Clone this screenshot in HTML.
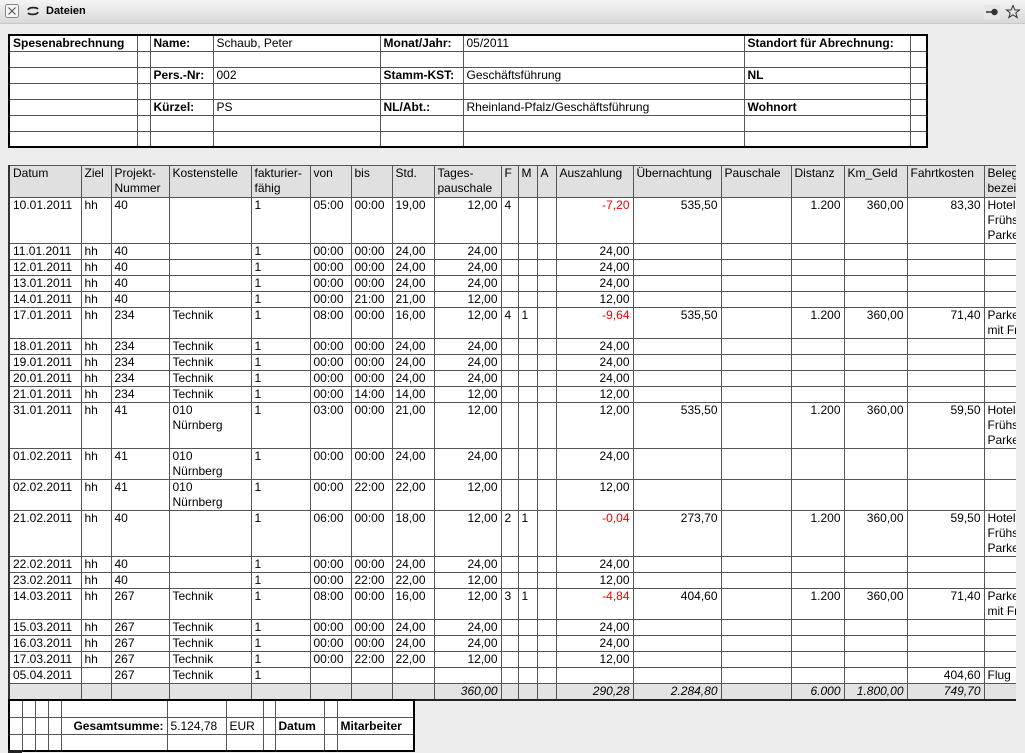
<!DOCTYPE html>
<html><head><meta charset="utf-8"><style>
*{box-sizing:border-box}
body{margin:0;width:1025px;height:753px;overflow:hidden;background:#ededed;font-family:"Liberation Sans",Arial,sans-serif;font-size:12px;color:#000;position:relative}
#bar{position:absolute;left:0;top:0;width:1025px;height:24px;background:linear-gradient(#f4f4f4,#d9d9d9);border-bottom:1px solid #c8c8c8}
#bar .t{position:absolute;left:46px;top:5px;font-weight:bold;font-size:11px}
table{border-collapse:collapse;table-layout:fixed;position:absolute;background:#fff}
td{border:1px solid #555;padding:0 3px;vertical-align:top;line-height:15px;white-space:nowrap;overflow:hidden}
#top{left:8px;top:34px;width:918px;border:2px solid #000}
#top tr{height:16px}
#top td{line-height:14px}
b{font-weight:bold}
#wrap{position:absolute;left:8px;top:165px;width:1008px;height:536px;overflow:hidden}
#main{left:0;top:0;width:1064px;border-left:2px solid #333;border-top:1px solid #555;border-bottom:2px solid #222}
#main tr{height:16px}
#main tr.h{height:32px;background:#e0e0e0}
#main tr.r2{height:31px}
#main tr.r3{height:46px}
#main tr.tot{background:#e3e3e3;font-style:italic}
.r{text-align:right}
.red{color:#e00}
#foot{left:8px;top:699px;width:405px;border:2px solid #000}
#foot tr{height:17px}
#foot td{line-height:16px}
</style></head><body>
<div id="bar">
<svg style="position:absolute;left:5px;top:4px" width="14" height="14"><rect x="0.5" y="0.5" width="13" height="13" rx="2" fill="#f6f6f6" stroke="#888"/><path d="M3.5 3.5L10.5 10.5M10.5 3.5L3.5 10.5" stroke="#555" stroke-width="1.2"/></svg>
<svg style="position:absolute;left:26px;top:6px" width="14" height="10"><path d="M2 4C3 1 10 1 12 3M12 6C11 9 4 9 2 7" stroke="#222" stroke-width="1.8" fill="none"/></svg>
<span class="t">Dateien</span>
<svg style="position:absolute;left:984px;top:5px" width="16" height="14"><rect x="0" y="0" width="16" height="14" fill="#e6e6e6"/><path d="M2 7H8" stroke="#333" stroke-width="1.5"/><circle cx="10.5" cy="7" r="3.2" fill="#333"/></svg>
<svg style="position:absolute;left:1005px;top:4px" width="16" height="16"><path d="M8 1.5L9.9 6H14.5L10.8 8.9L12.2 13.6L8 10.8L3.8 13.6L5.2 8.9L1.5 6H6.1Z" fill="none" stroke="#333" stroke-width="1"/></svg>
</div>

<table id="top">
<colgroup><col style="width:128px"><col style="width:13px"><col style="width:63px"><col style="width:167px"><col style="width:83px"><col style="width:281px"><col style="width:166px"><col style="width:17px"></colgroup>
<tr><td><b>Spesenabrechnung</b></td><td></td><td><b>Name:</b></td><td>Schaub, Peter</td><td><b>Monat/Jahr:</b></td><td>05/2011</td><td><b>Standort für Abrechnung:</b></td><td></td></tr>
<tr><td></td><td></td><td></td><td></td><td></td><td></td><td></td><td></td></tr>
<tr><td></td><td></td><td><b>Pers.-Nr:</b></td><td>002</td><td><b>Stamm-KST:</b></td><td>Geschäftsführung</td><td><b>NL</b></td><td></td></tr>
<tr><td></td><td></td><td></td><td></td><td></td><td></td><td></td><td></td></tr>
<tr><td></td><td></td><td><b>Kürzel:</b></td><td>PS</td><td><b>NL/Abt.:</b></td><td>Rheinland-Pfalz/Geschäftsführung</td><td><b>Wohnort</b></td><td></td></tr>
<tr><td></td><td></td><td></td><td></td><td></td><td></td><td></td><td></td></tr>
<tr><td></td><td></td><td></td><td></td><td></td><td></td><td></td><td></td></tr>
</table>

<div id="wrap">
<table id="main">
<colgroup><col style="width:72px"><col style="width:30px"><col style="width:58px"><col style="width:82px"><col style="width:59px"><col style="width:41px"><col style="width:41px"><col style="width:42px"><col style="width:67px"><col style="width:17px"><col style="width:19px"><col style="width:19px"><col style="width:77px"><col style="width:88px"><col style="width:70px"><col style="width:53px"><col style="width:63px"><col style="width:77px"><col style="width:90px"></colgroup>
<tr class="h"><td>Datum</td><td>Ziel</td><td>Projekt-<br>Nummer</td><td>Kostenstelle</td><td>fakturier-<br>fähig</td><td>von</td><td>bis</td><td>Std.</td><td>Tages-<br>pauschale</td><td>F</td><td>M</td><td>A</td><td>Auszahlung</td><td>Übernachtung</td><td>Pauschale</td><td>Distanz</td><td>Km_Geld</td><td>Fahrtkosten</td><td>Beleg<br>bezeichnung</td></tr>
<tr class="r3"><td>10.01.2011</td><td>hh</td><td>40</td><td></td><td>1</td><td>05:00</td><td>00:00</td><td>19,00</td><td class="r">12,00</td><td>4</td><td></td><td></td><td class="r red">-7,20</td><td class="r">535,50</td><td></td><td class="r">1.200</td><td class="r">360,00</td><td class="r">83,30</td><td>Hotel<br>Frühstück<br>Parken</td></tr>
<tr><td>11.01.2011</td><td>hh</td><td>40</td><td></td><td>1</td><td>00:00</td><td>00:00</td><td>24,00</td><td class="r">24,00</td><td></td><td></td><td></td><td class="r">24,00</td><td></td><td></td><td></td><td></td><td></td><td></td></tr>
<tr><td>12.01.2011</td><td>hh</td><td>40</td><td></td><td>1</td><td>00:00</td><td>00:00</td><td>24,00</td><td class="r">24,00</td><td></td><td></td><td></td><td class="r">24,00</td><td></td><td></td><td></td><td></td><td></td><td></td></tr>
<tr><td>13.01.2011</td><td>hh</td><td>40</td><td></td><td>1</td><td>00:00</td><td>00:00</td><td>24,00</td><td class="r">24,00</td><td></td><td></td><td></td><td class="r">24,00</td><td></td><td></td><td></td><td></td><td></td><td></td></tr>
<tr><td>14.01.2011</td><td>hh</td><td>40</td><td></td><td>1</td><td>00:00</td><td>21:00</td><td>21,00</td><td class="r">12,00</td><td></td><td></td><td></td><td class="r">12,00</td><td></td><td></td><td></td><td></td><td></td><td></td></tr>
<tr class="r2"><td>17.01.2011</td><td>hh</td><td>234</td><td>Technik</td><td>1</td><td>08:00</td><td>00:00</td><td>16,00</td><td class="r">12,00</td><td>4</td><td>1</td><td></td><td class="r red">-9,64</td><td class="r">535,50</td><td></td><td class="r">1.200</td><td class="r">360,00</td><td class="r">71,40</td><td>Parken<br>mit Frühstück</td></tr>
<tr><td>18.01.2011</td><td>hh</td><td>234</td><td>Technik</td><td>1</td><td>00:00</td><td>00:00</td><td>24,00</td><td class="r">24,00</td><td></td><td></td><td></td><td class="r">24,00</td><td></td><td></td><td></td><td></td><td></td><td></td></tr>
<tr><td>19.01.2011</td><td>hh</td><td>234</td><td>Technik</td><td>1</td><td>00:00</td><td>00:00</td><td>24,00</td><td class="r">24,00</td><td></td><td></td><td></td><td class="r">24,00</td><td></td><td></td><td></td><td></td><td></td><td></td></tr>
<tr><td>20.01.2011</td><td>hh</td><td>234</td><td>Technik</td><td>1</td><td>00:00</td><td>00:00</td><td>24,00</td><td class="r">24,00</td><td></td><td></td><td></td><td class="r">24,00</td><td></td><td></td><td></td><td></td><td></td><td></td></tr>
<tr><td>21.01.2011</td><td>hh</td><td>234</td><td>Technik</td><td>1</td><td>00:00</td><td>14:00</td><td>14,00</td><td class="r">12,00</td><td></td><td></td><td></td><td class="r">12,00</td><td></td><td></td><td></td><td></td><td></td><td></td></tr>
<tr class="r3"><td>31.01.2011</td><td>hh</td><td>41</td><td>010<br>Nürnberg</td><td>1</td><td>03:00</td><td>00:00</td><td>21,00</td><td class="r">12,00</td><td></td><td></td><td></td><td class="r">12,00</td><td class="r">535,50</td><td></td><td class="r">1.200</td><td class="r">360,00</td><td class="r">59,50</td><td>Hotel<br>Frühstück<br>Parken</td></tr>
<tr class="r2"><td>01.02.2011</td><td>hh</td><td>41</td><td>010<br>Nürnberg</td><td>1</td><td>00:00</td><td>00:00</td><td>24,00</td><td class="r">24,00</td><td></td><td></td><td></td><td class="r">24,00</td><td></td><td></td><td></td><td></td><td></td><td></td></tr>
<tr class="r2"><td>02.02.2011</td><td>hh</td><td>41</td><td>010<br>Nürnberg</td><td>1</td><td>00:00</td><td>22:00</td><td>22,00</td><td class="r">12,00</td><td></td><td></td><td></td><td class="r">12,00</td><td></td><td></td><td></td><td></td><td></td><td></td></tr>
<tr class="r3"><td>21.02.2011</td><td>hh</td><td>40</td><td></td><td>1</td><td>06:00</td><td>00:00</td><td>18,00</td><td class="r">12,00</td><td>2</td><td>1</td><td></td><td class="r red">-0,04</td><td class="r">273,70</td><td></td><td class="r">1.200</td><td class="r">360,00</td><td class="r">59,50</td><td>Hotel<br>Frühstück<br>Parken</td></tr>
<tr><td>22.02.2011</td><td>hh</td><td>40</td><td></td><td>1</td><td>00:00</td><td>00:00</td><td>24,00</td><td class="r">24,00</td><td></td><td></td><td></td><td class="r">24,00</td><td></td><td></td><td></td><td></td><td></td><td></td></tr>
<tr><td>23.02.2011</td><td>hh</td><td>40</td><td></td><td>1</td><td>00:00</td><td>22:00</td><td>22,00</td><td class="r">12,00</td><td></td><td></td><td></td><td class="r">12,00</td><td></td><td></td><td></td><td></td><td></td><td></td></tr>
<tr class="r2"><td>14.03.2011</td><td>hh</td><td>267</td><td>Technik</td><td>1</td><td>08:00</td><td>00:00</td><td>16,00</td><td class="r">12,00</td><td>3</td><td>1</td><td></td><td class="r red">-4,84</td><td class="r">404,60</td><td></td><td class="r">1.200</td><td class="r">360,00</td><td class="r">71,40</td><td>Parken<br>mit Frühstück</td></tr>
<tr><td>15.03.2011</td><td>hh</td><td>267</td><td>Technik</td><td>1</td><td>00:00</td><td>00:00</td><td>24,00</td><td class="r">24,00</td><td></td><td></td><td></td><td class="r">24,00</td><td></td><td></td><td></td><td></td><td></td><td></td></tr>
<tr><td>16.03.2011</td><td>hh</td><td>267</td><td>Technik</td><td>1</td><td>00:00</td><td>00:00</td><td>24,00</td><td class="r">24,00</td><td></td><td></td><td></td><td class="r">24,00</td><td></td><td></td><td></td><td></td><td></td><td></td></tr>
<tr><td>17.03.2011</td><td>hh</td><td>267</td><td>Technik</td><td>1</td><td>00:00</td><td>22:00</td><td>22,00</td><td class="r">12,00</td><td></td><td></td><td></td><td class="r">12,00</td><td></td><td></td><td></td><td></td><td></td><td></td></tr>
<tr><td>05.04.2011</td><td></td><td>267</td><td>Technik</td><td>1</td><td></td><td></td><td></td><td></td><td></td><td></td><td></td><td></td><td></td><td></td><td></td><td></td><td class="r">404,60</td><td>Flug</td></tr>
<tr class="tot"><td></td><td></td><td></td><td></td><td></td><td></td><td></td><td></td><td class="r">360,00</td><td></td><td></td><td></td><td class="r">290,28</td><td class="r">2.284,80</td><td></td><td class="r">6.000</td><td class="r">1.800,00</td><td class="r">749,70</td><td></td></tr>
</table>
</div>

<table id="foot">
<colgroup><col style="width:13px"><col style="width:13px"><col style="width:13px"><col style="width:13px"><col style="width:106px"><col style="width:59px"><col style="width:37px"><col style="width:12px"><col style="width:49px"><col style="width:13px"><col style="width:77px"></colgroup>
<tr><td></td><td></td><td></td><td></td><td></td><td></td><td></td><td></td><td></td><td></td><td></td></tr>
<tr><td></td><td></td><td></td><td></td><td class="r"><b>Gesamtsumme:</b></td><td>5.124,78</td><td>EUR</td><td></td><td><b>Datum</b></td><td></td><td><b>Mitarbeiter</b></td></tr>
<tr><td></td><td></td><td></td><td></td><td></td><td></td><td></td><td></td><td></td><td></td><td></td></tr>
</table>
<div style="position:absolute;left:8px;top:750px;width:14px;height:3px;background:#222"></div>
</body></html>
